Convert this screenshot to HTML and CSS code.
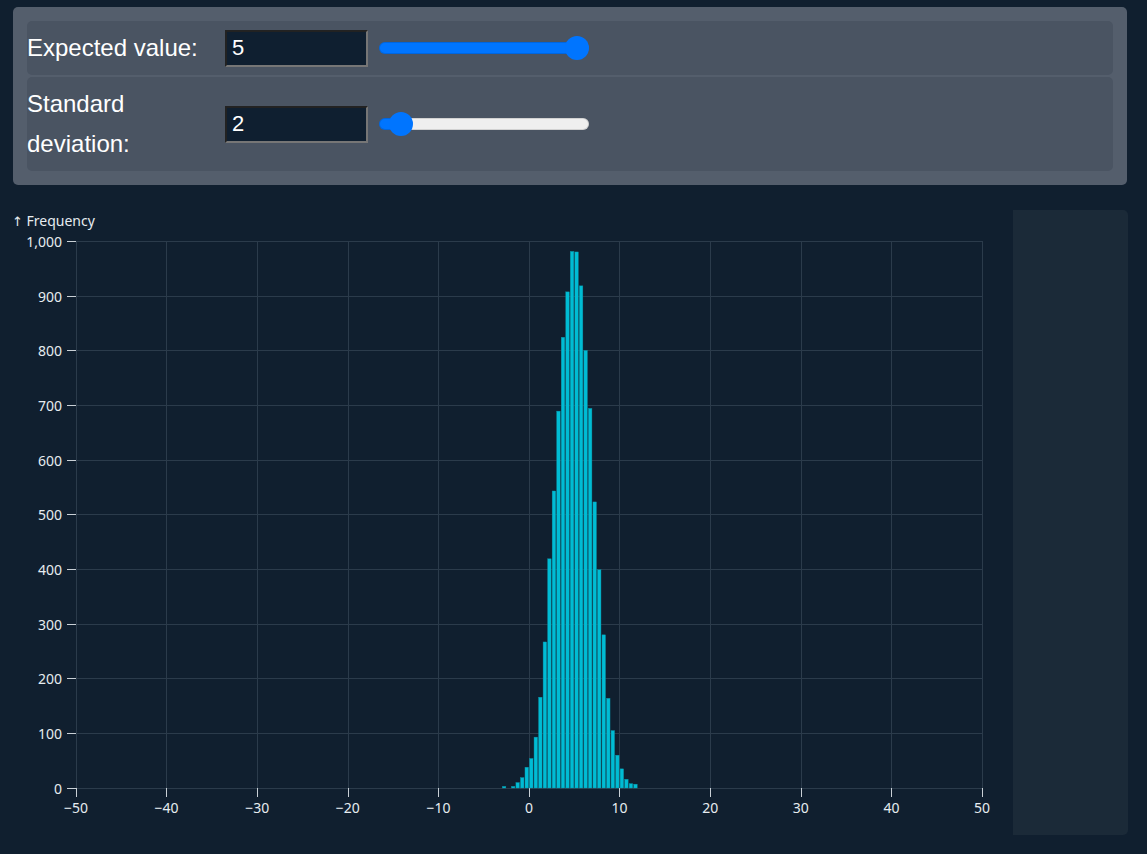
FILE: index.html
```html
<!DOCTYPE html>
<html lang="en">
<head>
<meta charset="utf-8">
<title>Normal distribution</title>
<link rel="stylesheet" href="styles.css">
</head>
<body>
<section class="controls">
  <div class="row">
    <label class="label" for="mean">Expected value:</label>
    <input class="num" id="mean" type="text" value="5">
    <input class="slider" type="range" min="-5" max="5" step="0.1" value="5" style="--fill:100%">
  </div>
  <div class="row">
    <label class="label" for="sd">Standard deviation:</label>
    <input class="num" id="sd" type="text" value="2">
    <input class="slider" type="range" min="1" max="20" step="0.1" value="2" style="--fill:10%">
  </div>
</section>
<section class="chart-row">
  <svg class="chart" width="1000" height="640" viewBox="13 197 1000 640" xmlns="http://www.w3.org/2000/svg">
    <text class="axis-label" x="12" y="226"><tspan class="arrow">↑</tspan> Frequency</text>
    <g class="grid">
      <line x1="76" x2="982" y1="788.5" y2="788.5"/>
      <line x1="76" x2="982" y1="733.5" y2="733.5"/>
      <line x1="76" x2="982" y1="678.5" y2="678.5"/>
      <line x1="76" x2="982" y1="624.5" y2="624.5"/>
      <line x1="76" x2="982" y1="569.5" y2="569.5"/>
      <line x1="76" x2="982" y1="514.5" y2="514.5"/>
      <line x1="76" x2="982" y1="460.5" y2="460.5"/>
      <line x1="76" x2="982" y1="405.5" y2="405.5"/>
      <line x1="76" x2="982" y1="350.5" y2="350.5"/>
      <line x1="76" x2="982" y1="296.5" y2="296.5"/>
      <line x1="76" x2="982" y1="241.5" y2="241.5"/>
      <line x1="76.5" x2="76.5" y1="241" y2="788"/>
      <line x1="166.5" x2="166.5" y1="241" y2="788"/>
      <line x1="257.5" x2="257.5" y1="241" y2="788"/>
      <line x1="348.5" x2="348.5" y1="241" y2="788"/>
      <line x1="438.5" x2="438.5" y1="241" y2="788"/>
      <line x1="529.5" x2="529.5" y1="241" y2="788"/>
      <line x1="619.5" x2="619.5" y1="241" y2="788"/>
      <line x1="710.5" x2="710.5" y1="241" y2="788"/>
      <line x1="801.5" x2="801.5" y1="241" y2="788"/>
      <line x1="891.5" x2="891.5" y1="241" y2="788"/>
      <line x1="982.5" x2="982.5" y1="241" y2="788"/>
    </g>
    <g class="ticks">
      <line x1="67" x2="76" y1="788.5" y2="788.5"/>
      <line x1="67" x2="76" y1="733.5" y2="733.5"/>
      <line x1="67" x2="76" y1="678.5" y2="678.5"/>
      <line x1="67" x2="76" y1="624.5" y2="624.5"/>
      <line x1="67" x2="76" y1="569.5" y2="569.5"/>
      <line x1="67" x2="76" y1="514.5" y2="514.5"/>
      <line x1="67" x2="76" y1="460.5" y2="460.5"/>
      <line x1="67" x2="76" y1="405.5" y2="405.5"/>
      <line x1="67" x2="76" y1="350.5" y2="350.5"/>
      <line x1="67" x2="76" y1="296.5" y2="296.5"/>
      <line x1="67" x2="76" y1="241.5" y2="241.5"/>
      <line x1="76.5" x2="76.5" y1="788" y2="797"/>
      <line x1="166.5" x2="166.5" y1="788" y2="797"/>
      <line x1="257.5" x2="257.5" y1="788" y2="797"/>
      <line x1="348.5" x2="348.5" y1="788" y2="797"/>
      <line x1="438.5" x2="438.5" y1="788" y2="797"/>
      <line x1="529.5" x2="529.5" y1="788" y2="797"/>
      <line x1="619.5" x2="619.5" y1="788" y2="797"/>
      <line x1="710.5" x2="710.5" y1="788" y2="797"/>
      <line x1="801.5" x2="801.5" y1="788" y2="797"/>
      <line x1="891.5" x2="891.5" y1="788" y2="797"/>
      <line x1="982.5" x2="982.5" y1="788" y2="797"/>
    </g>
    <g class="ylabels">
      <text x="62" y="788.5">0</text>
      <text x="62" y="733.5">100</text>
      <text x="62" y="678.5">200</text>
      <text x="62" y="624">300</text>
      <text x="62" y="569.5">400</text>
      <text x="62" y="514.5">500</text>
      <text x="62" y="460">600</text>
      <text x="62" y="405.5">700</text>
      <text x="62" y="350.5">800</text>
      <text x="62" y="296">900</text>
      <text x="62" y="241.5">1,000</text>
    </g>
    <g class="xlabels">
      <text x="76" y="812.5">−50</text>
      <text x="166.6" y="812.5">−40</text>
      <text x="257.2" y="812.5">−30</text>
      <text x="347.8" y="812.5">−20</text>
      <text x="438.4" y="812.5">−10</text>
      <text x="529" y="812.5">0</text>
      <text x="619.6" y="812.5">10</text>
      <text x="710.2" y="812.5">20</text>
      <text x="800.8" y="812.5">30</text>
      <text x="891.4" y="812.5">40</text>
      <text x="982" y="812.5">50</text>
    </g>
    <g class="bars">
      <rect x="502.32" y="786.36" width="3.53" height="1.64"/>
      <rect x="511.38" y="786.36" width="3.53" height="1.64"/>
      <rect x="515.91" y="782.53" width="3.53" height="5.47"/>
      <rect x="520.44" y="777.61" width="3.53" height="10.39"/>
      <rect x="524.97" y="767.21" width="3.53" height="20.79"/>
      <rect x="529.5" y="758.46" width="3.53" height="29.54"/>
      <rect x="534.03" y="737.13" width="3.53" height="50.87"/>
      <rect x="538.56" y="697.2" width="3.53" height="90.8"/>
      <rect x="543.09" y="641.95" width="3.53" height="146.05"/>
      <rect x="547.62" y="558.81" width="3.53" height="229.19"/>
      <rect x="552.15" y="490.98" width="3.53" height="297.02"/>
      <rect x="556.68" y="411.12" width="3.53" height="376.88"/>
      <rect x="561.21" y="337.27" width="3.53" height="450.73"/>
      <rect x="565.74" y="291.87" width="3.53" height="496.13"/>
      <rect x="570.27" y="251.39" width="3.53" height="536.61"/>
      <rect x="574.8" y="251.94" width="3.53" height="536.06"/>
      <rect x="579.33" y="285.85" width="3.53" height="502.15"/>
      <rect x="583.86" y="350.4" width="3.53" height="437.6"/>
      <rect x="588.39" y="408.38" width="3.53" height="379.62"/>
      <rect x="592.92" y="501.92" width="3.53" height="286.08"/>
      <rect x="597.45" y="569.75" width="3.53" height="218.25"/>
      <rect x="601.98" y="634.84" width="3.53" height="153.16"/>
      <rect x="606.51" y="698.29" width="3.53" height="89.71"/>
      <rect x="611.04" y="730.56" width="3.53" height="57.44"/>
      <rect x="615.57" y="755.18" width="3.53" height="32.82"/>
      <rect x="620.1" y="768.85" width="3.53" height="19.15"/>
      <rect x="624.63" y="779.25" width="3.53" height="8.75"/>
      <rect x="629.16" y="783.62" width="3.53" height="4.38"/>
      <rect x="633.69" y="784.17" width="3.53" height="3.83"/>
    </g>
  </svg>
  <aside class="side"></aside>
</section>
</body>
</html>
```
FILE: styles.css
```css
html, body {
  margin: 0;
  background: #101f2f;
}

body {
  padding: 7px 0 0 13px;
  font-family: "Liberation Sans", Arial, sans-serif;
  color: #ffffff;
}

.controls {
  width: 1114px;
  box-sizing: border-box;
  padding: 14px;
  background: #545e6c;
  border-radius: 5px;
  display: flex;
  flex-direction: column;
  gap: 2px;
}

.row {
  display: flex;
  align-items: center;
  padding: 7px 0;
  line-height: 40px;
  background: #4a5462;
  border-radius: 5px;
}

.label {
  width: 198px;
  flex: none;
  font-size: 24px;
  color: #ffffff;
}

.num {
  flex: none;
  width: 143px;
  height: 37px;
  box-sizing: border-box;
  margin: 0;
  padding: 0 5px;
  background: #0f1f30;
  color: #ffffff;
  font-family: "Liberation Sans", Arial, sans-serif;
  font-size: 22px;
  border-width: 2px;
  border-style: solid;
  border-color: #222222 #767676 #767676 #222222;
  outline: none;
}

.slider {
  -webkit-appearance: none;
  appearance: none;
  flex: none;
  width: 210px;
  height: 24px;
  margin: 0 0 0 11px;
  padding: 0;
  background: transparent;
}

.slider::-webkit-slider-runnable-track {
  height: 12px;
  border-radius: 6px;
  background: linear-gradient(to right, #0075ff var(--fill), #efefef var(--fill));
  box-shadow: inset 0 0 0 1px rgba(0, 0, 0, 0.12);
}

.slider::-webkit-slider-thumb {
  -webkit-appearance: none;
  appearance: none;
  width: 24px;
  height: 24px;
  margin-top: -6px;
  border: none;
  border-radius: 50%;
  background: #0075ff;
}

.chart-row {
  display: flex;
  align-items: flex-start;
  margin-top: 12px;
}

.chart {
  display: block;
  flex: none;
  overflow: visible;
  font-family: "Noto Sans", "Open Sans", sans-serif;
  font-size: 14px;
}

.axis-label {
  fill: #e6ecf0;
}

.arrow {
  font-family: "DejaVu Sans", sans-serif;
  font-size: 13px;
}

.grid line {
  stroke: #2b3b4b;
  stroke-width: 1;
}

.ticks line {
  stroke: #c9d0d6;
  stroke-width: 1;
}

.ylabels text {
  fill: #e6ecf0;
  text-anchor: end;
  dominant-baseline: central;
}

.xlabels text {
  fill: #e6ecf0;
  text-anchor: middle;
}

.bars rect {
  fill: #00bcd4;
  stroke: #0b8fa3;
  stroke-width: 0.4;
}

.side {
  flex: none;
  width: 115px;
  height: 625px;
  margin-top: 13px;
  background: #1b2a38;
  border-radius: 0 5px 5px 0;
}
```
